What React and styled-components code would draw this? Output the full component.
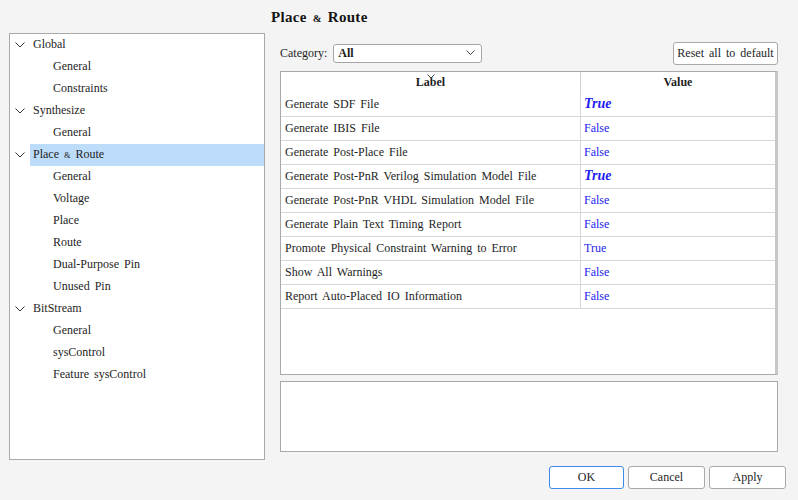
import styled, { createGlobalStyle } from 'styled-components';

const GlobalStyle = createGlobalStyle`
    html, body {
        margin: 0;
        padding: 0;
        background: #f4f4f4;
    }
    * {
        box-sizing: border-box;
    }
`;

const Window = styled.div`
    width: 798px;
    height: 500px;
    background: #f4f4f4;
    font-family: 'Liberation Serif', 'Times New Roman', serif;
    font-size: 12px;
    word-spacing: 2px;
    color: #1e1e1e;
    display: flex;
    flex-direction: column;
`;

const Content = styled.div`
    display: grid;
    grid-template-columns: 256px 507px;
    column-gap: 6px;
    padding-left: 9px;
`;

const TreePanel = styled.div`
    margin-top: 33px;
    height: 427px;
    background: #fff;
    border: 1px solid #a9a9a9;
`;

const TreeRow = styled.div`
    height: 22px;
    display: flex;
    align-items: center;
    padding-left: ${(p) => (p.$child ? 40 : 0)}px;
`;

const Chevron = styled.span`
    width: 20px;
    height: 22px;
    display: flex;
    align-items: center;
    justify-content: center;
`;

const TreeLabel = styled.span`
    flex: 1;
    height: 22px;
    line-height: 21px;
    padding-left: 3px;
    white-space: pre;
    background: ${(p) => (p.$selected ? '#bcdcfa' : 'transparent')};
`;

const Amp = styled.span`
    font-size: 0.7em;
`;

const RightColumn = styled.div`
    display: flex;
    flex-direction: column;
`;

const Title = styled.h1`
    margin: 0;
    height: 42px;
    padding-top: 9px;
    font-size: 15px;
    font-weight: bold;
    letter-spacing: 0.3px;
    color: #141414;
`;

const Body = styled.div`
    padding-left: 9px;
    display: flex;
    flex-direction: column;
`;

const Toolbar = styled.div`
    height: 22px;
    display: flex;
    align-items: center;
    margin-bottom: 7px;
`;

const FieldLabel = styled.span`
    margin-right: 6px;
`;

const Select = styled.div`
    width: 149px;
    height: 19px;
    background: #fff;
    border: 1px solid #a6a6a6;
    border-radius: 3px;
    display: flex;
    align-items: center;
    justify-content: space-between;
    padding: 0 6px 0 4px;
    font-weight: bold;
`;

const Button = styled.button`
    height: 23px;
    font-family: inherit;
    font-size: 12px;
    word-spacing: 2px;
    color: #1e1e1e;
    background: #fff;
    border: 1px solid ${(p) => (p.$primary ? '#3b8beb' : '#a9a9a9')};
    border-radius: 3px;
    padding: 0 2px;
    width: ${(p) => (p.$width ? `${p.$width}px` : 'auto')};
`;

const ResetButton = styled(Button)`
    margin-left: auto;
`;

const Table = styled.div`
    height: 304px;
    background: #fff;
    border: 1px solid #a9a9a9;
    border-right: 3px solid #c6c6c6;
`;

const HeaderRow = styled.div`
    display: grid;
    grid-template-columns: 299px 1fr;
    height: 21px;
`;

const HeaderCell = styled.div`
    position: relative;
    display: flex;
    align-items: center;
    justify-content: center;
    font-weight: bold;
    border-left: ${(p) => (p.$divider ? '1px solid #d2d2d2' : 'none')};
`;

const SortMark = styled.svg`
    position: absolute;
    top: 2px;
    left: 50%;
    margin-left: -4px;
`;

const Row = styled.div`
    display: grid;
    grid-template-columns: 299px 1fr;
    height: 24px;
    border-bottom: 1px solid #d6d6d6;
`;

const Cell = styled.div`
    display: flex;
    align-items: center;
    padding-left: ${(p) => (p.$divider ? 3 : 4)}px;
    padding-bottom: 1px;
    white-space: pre;
    border-left: ${(p) => (p.$divider ? '1px solid #d6d6d6' : 'none')};
`;

const Value = styled.span`
    color: #1d1df0;
    font-weight: ${(p) => (p.$modified ? 'bold' : 'normal')};
    font-style: ${(p) => (p.$modified ? 'italic' : 'normal')};
    font-size: ${(p) => (p.$modified ? 14 : 12)}px;
`;

const InfoBox = styled.div`
    margin-top: 6px;
    height: 71px;
    background: #fff;
    border: 1px solid #a9a9a9;
`;

const Footer = styled.div`
    display: flex;
    justify-content: flex-end;
    gap: 4px;
    padding: 6px 12px 0 0;
`;

const ChevronIcon = ({ size = 10 }) => (
    <svg width={size} height={size * 0.6} viewBox="0 0 10 6">
        <path d="M0.5 0.5 L5 5 L9.5 0.5" fill="none" stroke="#333" strokeWidth="1" />
    </svg>
);

const tree = [
    { label: 'Global', children: ['General', 'Constraints'] },
    { label: 'Synthesize', children: ['General'] },
    {
        label: 'Place & Route',
        selected: true,
        children: ['General', 'Voltage', 'Place', 'Route', 'Dual-Purpose Pin', 'Unused Pin'],
    },
    { label: 'BitStream', children: ['General', 'sysControl', 'Feature sysControl'] },
];

const options = [
    { label: 'Generate SDF File', value: 'True', modified: true },
    { label: 'Generate IBIS File', value: 'False' },
    { label: 'Generate Post-Place File', value: 'False' },
    { label: 'Generate Post-PnR Verilog Simulation Model File', value: 'True', modified: true },
    { label: 'Generate Post-PnR VHDL Simulation Model File', value: 'False' },
    { label: 'Generate Plain Text Timing Report', value: 'False' },
    { label: 'Promote Physical Constraint Warning to Error', value: 'True' },
    { label: 'Show All Warnings', value: 'False' },
    { label: 'Report Auto-Placed IO Information', value: 'False' },
];

const withAmp = (text) => {
    const parts = text.split('&');
    if (parts.length === 1) return text;
    return (
        <span>
            {parts[0]}
            <Amp>&amp;</Amp>
            {parts[1]}
        </span>
    );
};

const App = () => {
    return (
        <Window>
            <GlobalStyle />
            <Content>
                <TreePanel>
                    {tree.map((group) => (
                        <div key={group.label}>
                            <TreeRow>
                                <Chevron>
                                    <ChevronIcon />
                                </Chevron>
                                <TreeLabel $selected={group.selected}>{withAmp(group.label)}</TreeLabel>
                            </TreeRow>
                            {group.children.map((child, i) => (
                                <TreeRow key={i} $child>
                                    <TreeLabel>{child}</TreeLabel>
                                </TreeRow>
                            ))}
                        </div>
                    ))}
                </TreePanel>
                <RightColumn>
                    <Title>{withAmp('Place & Route')}</Title>
                    <Body>
                        <Toolbar>
                            <FieldLabel>Category:</FieldLabel>
                            <Select>
                                <span>All</span>
                                <ChevronIcon size={9} />
                            </Select>
                            <ResetButton $width={105}>Reset all to default</ResetButton>
                        </Toolbar>
                        <Table>
                            <HeaderRow>
                                <HeaderCell>
                                    <SortMark width="8" height="5" viewBox="0 0 8 5">
                                        <path d="M0.5 0.5 L4 4 L7.5 0.5" fill="none" stroke="#444" strokeWidth="1" />
                                    </SortMark>
                                    Label
                                </HeaderCell>
                                <HeaderCell $divider>Value</HeaderCell>
                            </HeaderRow>
                            {options.map((opt) => (
                                <Row key={opt.label}>
                                    <Cell>{opt.label}</Cell>
                                    <Cell $divider>
                                        <Value $modified={opt.modified}>{opt.value}</Value>
                                    </Cell>
                                </Row>
                            ))}
                        </Table>
                        <InfoBox />
                    </Body>
                </RightColumn>
            </Content>
            <Footer>
                <Button $primary $width={75}>OK</Button>
                <Button $width={77}>Cancel</Button>
                <Button $width={77}>Apply</Button>
            </Footer>
        </Window>
    );
};

export default App;
